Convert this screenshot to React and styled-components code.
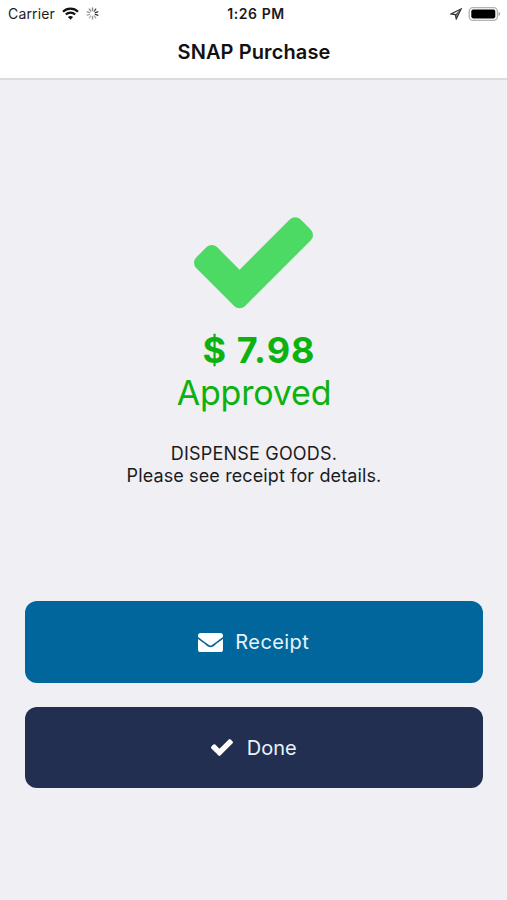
import React from "react";
import styled, { createGlobalStyle } from "styled-components";

const GlobalStyle = createGlobalStyle`
  * { box-sizing: border-box; }
  body { margin: 0; background: #efeff4; }
`;

const Screen = styled.div`
  display: flex;
  flex-direction: column;
  width: 100%;
  height: 900px;
  overflow: hidden;
  background: #efeff4;
  color: #1b1b1d;
  font-family: Inter, "Liberation Sans", sans-serif;
`;

const Header = styled.header`
  height: 80px;
  background: #fff;
  border-bottom: 2px solid #dcdce0;
`;

const StatusBar = styled.div`
  display: grid;
  grid-template-columns: 1fr auto 1fr;
  align-items: center;
  height: 27px;
  padding: 0 6px 0 8px;
`;

const StatusGroup = styled.div`
  display: flex;
  align-items: center;
  justify-content: ${(p) => (p.$end ? "flex-end" : "flex-start")};
  gap: ${(p) => p.$gap}px;
`;

const Carrier = styled.span`
  font-size: 14px;
  letter-spacing: 0.15px;
  line-height: 27px;
`;

const Time = styled.time`
  padding-left: 3px;
  font-size: 14px;
  font-weight: 600;
  letter-spacing: 0.6px;
  line-height: 27px;
`;

const Title = styled.h1`
  margin: 0;
  padding-left: 1px;
  font-size: 20px;
  font-weight: 600;
  line-height: 50px;
  letter-spacing: 0.1px;
  text-align: center;
  color: #111;
`;

const Result = styled.main`
  display: flex;
  flex-direction: column;
  align-items: center;
  height: 521px;
  padding: 137px 0 0 1px;
`;

const Icon = styled.svg`
  display: block;
  flex: none;
  fill: currentColor;
`;

const SuccessIcon = styled(Icon)`
  margin-right: 1px;
  color: #4cd964;
`;

const Amount = styled.div`
  margin-top: 19px;
  padding-left: 10px;
  font-size: 36px;
  font-weight: 700;
  line-height: 44px;
  letter-spacing: 1px;
  white-space: pre;
  color: #0cb20f;
`;

const Status = styled.div`
  font-size: 34px;
  line-height: 42px;
  letter-spacing: -0.2px;
  color: #0cb20f;
`;

const Message = styled.p`
  margin: 29px 0 0;
  font-size: 18px;
  line-height: 22px;
  text-align: center;
`;

const MessageLine = styled.span`
  display: block;
  letter-spacing: ${(p) => p.$spacing}px;
`;

const Actions = styled.div`
  display: flex;
  flex-direction: column;
  gap: 24px;
  padding: 0 24.5px 0 25px;
`;

const Button = styled.button`
  display: flex;
  align-items: center;
  justify-content: center;
  gap: ${(p) => p.$gap}px;
  height: 81.6px;
  padding: 1px 0 0;
  border: 0;
  border-radius: 12px;
  background: ${(p) => p.$color};
  color: #fff;
  font: 400 20px/28px Inter, "Liberation Sans", sans-serif;
`;

const Label = styled.span`
  letter-spacing: ${(p) => p.$spacing}px;
  color: #e9f3fb;
`;

const CHECK =
  "M1671 566q0 40-28 68l-724 724-136 136q-28 28-68 28t-68-28l-136-136-362-362q-28-28-28-68t28-68l136-136q28-28 68-28t68 28l294 295 656-657q28-28 68-28t68 28l136 136q28 28 28 68z";

const ENVELOPE =
  "M502.3 190.8c3.9-3.1 9.7-.2 9.7 4.7V400c0 26.5-21.5 48-48 48H48c-26.5 0-48-21.5-48-48V195.6c0-5 5.7-7.8 9.7-4.7 22.4 17.4 52.1 39.5 154.1 113.6 21.1 15.4 56.7 47.8 92.2 47.6 35.7.3 72-32.8 92.3-47.6 102-74.1 131.6-96.3 154-113.7zM256 320c23.2.4 56.6-29.2 73.4-41.4 132.7-96.3 142.8-104.7 173.4-128.7 5.8-4.5 9.2-11.5 9.2-18.9v-19c0-26.5-21.5-48-48-48H48c-26.5 0-48 21.5-48 48v19c0 7.4 3.4 14.3 9.2 18.9 30.6 23.9 40.7 32.4 173.4 128.7 16.8 12.2 50.2 41.8 73.4 41.4z";

const Wifi = () => (
  <Icon width="17" height="13" viewBox="0 0 17 13">
    <g fill="none" stroke="#111" strokeWidth="2.2">
      <path d="M1 4.7A10.8 10.8 0 0 1 16 4.7" />
      <path d="M3.8 7.5A6.8 6.8 0 0 1 13.2 7.5" />
    </g>
    <path d="M8.5 12.7L5.9 10Q8.5 7.9 11.1 10Z" fill="#111" />
  </Icon>
);

const SPOKES = ["#888", "#555", "#333", "#333", "#aaa", "#999", "#bbb", "#aaa", "#999", "#888"];

const Spinner = () => (
  <Icon width="13" height="13" viewBox="-6.5 -6.5 13 13">
    {SPOKES.map((c, i) => (
      <path key={i} d="M0-3V-5.5" stroke={c} strokeWidth="1.4" strokeLinecap="round" transform={`rotate(${i * 36})`} />
    ))}
  </Icon>
);

const Location = () => (
  <Icon width="12" height="12" viewBox="0 0 12 12">
    <path d="M11 1L1 5.9L5.3 6.5L6.3 10.8Z" fill="none" stroke="#333" strokeWidth="1.3" />
    <path d="M11 1L5.3 6.5L6 8.5Z" fill="#444" />
  </Icon>
);

const Battery = () => (
  <Icon width="33" height="14" viewBox="0 0 33 14">
    <rect x="1.2" y="0.7" width="28.2" height="12.6" rx="3.8" fill="#fff" stroke="#b3b3b3" strokeWidth="1.3" />
    <rect x="3.3" y="2.6" width="24" height="8.8" rx="1.8" fill="#000" />
    <path d="M30.6 5v4q1.5-.6 1.5-2t-1.5-2z" fill="#999" />
  </Icon>
);

export default function App() {
  return (
    <>
      <GlobalStyle />
      <Screen>
        <Header>
          <StatusBar>
            <StatusGroup $gap={7}>
              <Carrier>Carrier</Carrier>
              <Wifi />
              <Spinner />
            </StatusGroup>
            <Time>1:26 PM</Time>
            <StatusGroup $gap={6} $end>
              <Location />
              <Battery />
            </StatusGroup>
          </StatusBar>
          <Title>SNAP Purchase</Title>
        </Header>
        <Result>
          <SuccessIcon width="119" height="91.5" viewBox="121 334 1550 1188">
            <path d={CHECK} />
          </SuccessIcon>
          <Amount>$ 7.98</Amount>
          <Status>Approved</Status>
          <Message>
            <MessageLine $spacing={0.2}>DISPENSE GOODS.</MessageLine>
            <MessageLine $spacing={0.12}>Please see receipt for details.</MessageLine>
          </Message>
        </Result>
        <Actions>
          <Button $color="#00669b" $gap={12}>
            <Icon width="25" height="19" viewBox="0 64 512 384" preserveAspectRatio="none">
              <path d={ENVELOPE} />
            </Icon>
            <Label $spacing={0.4}>Receipt</Label>
          </Button>
          <Button $color="#232f50" $gap={14}>
            <Icon width="22" height="17" viewBox="121 334 1550 1188">
              <path d={CHECK} />
            </Icon>
            <Label $spacing={0.05}>Done</Label>
          </Button>
        </Actions>
      </Screen>
    </>
  );
}
